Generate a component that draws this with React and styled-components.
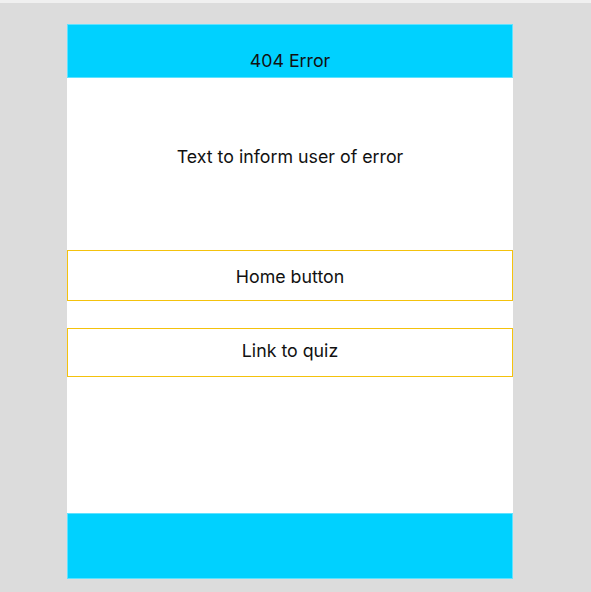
import React from "react";
import styled, { createGlobalStyle } from "styled-components";

const GlobalStyle = createGlobalStyle`
  html, body {
    margin: 0;
    padding: 0;
    background: #dcdcdc;
    font-family: "Inter", "Noto Sans", sans-serif;
  }
  #root {
    min-height: 592px;
    border-top: 3px solid #f0f0f0;
    box-sizing: border-box;
  }
`;

const Frame = styled.div`
  margin: 21px 0 0 67px;
  width: 446px;
  display: flex;
  flex-direction: column;
  background: #ffffff;
`;

const Bar = styled.div`
  height: ${(p) => p.$height}px;
  background: #00d1ff;
  border: 1px solid #5fe2ff;
  box-sizing: border-box;
  display: flex;
  justify-content: center;
  align-items: flex-end;
  padding-bottom: 6px;
`;

const Title = styled.h1`
  margin: 0;
  font-size: 17.8px;
  font-weight: 400;
  color: #111;
`;

const Body = styled.div`
  height: 435px;
  display: flex;
  flex-direction: column;
`;

const Message = styled.p`
  margin: 67px 0 0;
  height: 24px;
  line-height: 24px;
  text-align: center;
  font-size: 17.8px;
  color: #111;
`;

const Button = styled.button`
  margin-top: ${(p) => p.$top}px;
  height: ${(p) => p.$height}px;
  width: 100%;
  background: #ffffff;
  border: 1px solid #f4c20d;
  font-family: "Inter", "Noto Sans", sans-serif;
  font-size: 17.8px;
  color: #111;
  cursor: pointer;
  padding: ${(p) => (p.$lift > 0 ? `0 0 ${p.$lift}px` : `${-p.$lift}px 0 0`)};
`;

export default function App() {
  return (
    <>
      <GlobalStyle />
      <Frame>
        <Bar $height={54}>
          <Title>404 Error</Title>
        </Bar>
        <Body>
          <Message>Text to inform user of error</Message>
          <Button $top={81} $height={51} $lift={-2}>Home button</Button>
          <Button $top={27} $height={49} $lift={4}>Link to quiz</Button>
        </Body>
        <Bar $height={66} />
      </Frame>
    </>
  );
}
